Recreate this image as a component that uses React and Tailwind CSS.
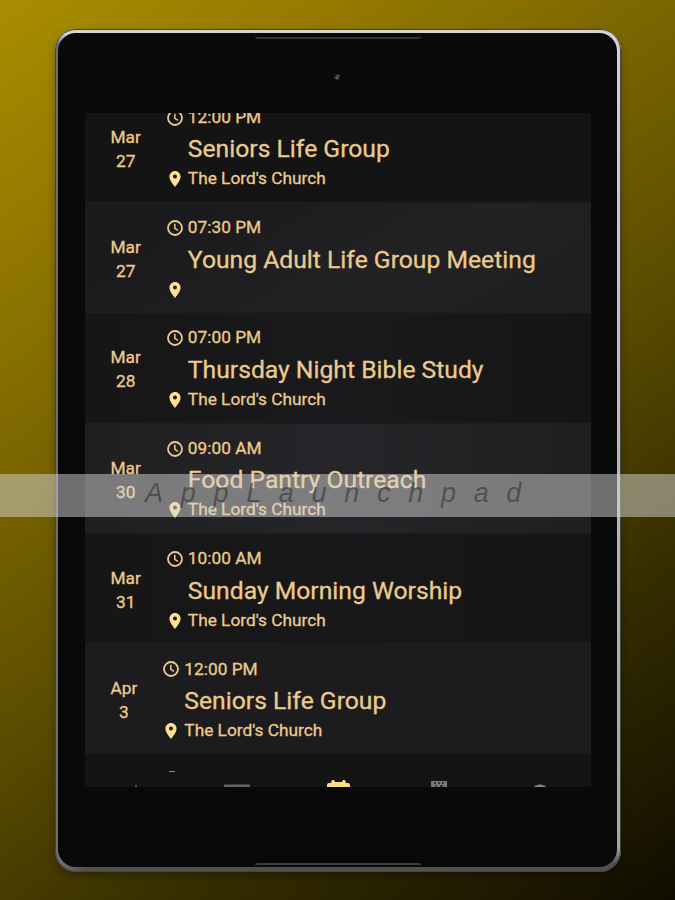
const events = [
  { month: "Mar", day: "27", time: "12:00 PM", title: "Seniors Life Group", place: "The Lord's Church", bg: "bg-[#141414]" },
  { month: "Mar", day: "27", time: "07:30 PM", title: "Young Adult Life Group Meeting", place: "", bg: "bg-[linear-gradient(150deg,#1b1b1d_20%,#222225_60%,#1e1e20)]" },
  { month: "Mar", day: "28", time: "07:00 PM", title: "Thursday Night Bible Study", place: "The Lord's Church", bg: "bg-[linear-gradient(90deg,#161617,#1a1a1c_50%,#151516)]" },
  { month: "Mar", day: "30", time: "09:00 AM", title: "Food Pantry Outreach", place: "The Lord's Church", bg: "bg-[linear-gradient(90deg,#1f1f21,#26262a_50%,#1f1f21)]" },
  { month: "Mar", day: "31", time: "10:00 AM", title: "Sunday Morning Worship", place: "The Lord's Church", bg: "bg-[linear-gradient(90deg,#161617,#18181a_50%,#151515)]" },
  { month: "Apr", day: "3", time: "12:00 PM", title: "Seniors Life Group", place: "The Lord's Church", bg: "bg-[#1c1c1e]" },
];

function Clock() {
  return (
    <svg viewBox="0 0 16 16" className="h-4 w-4 shrink-0" fill="none" stroke="currentColor">
      <circle cx="8" cy="8" r="7" strokeWidth="1.8" />
      <path d="M7.800 3.800v4.600l3.200 2" strokeWidth="1.500" />
    </svg>
  );
}

function Pin() {
  return (
    <svg viewBox="5 2 14 20" className="h-4 w-4 shrink-0 text-[#ffe093]" fill="currentColor">
      <path d="M12 2C8.130 2 5 5.130 5 9c0 5.250 7 13 7 13s7-7.750 7-13c0-3.870-3.130-7-7-7zm0 9.500a2.500 2.500 0 1 1 0-5 2.500 2.500 0 0 1 0 5z" />
    </svg>
  );
}

function EventRow({ event }) {
  return (
    <div className={`flex h-[110.350px] shrink-0 border-t border-[#1e1e20] pl-[26px] ${event.bg}`}>
      <div className="mt-[32px] text-center text-[17.300px] leading-6">
        <div>{event.month}</div>
        <div>{event.day}</div>
      </div>
      <div className="ml-[26px] mt-[13px]">
        <div className="flex h-6 items-center gap-[5px] text-[17.300px]">
          <Clock />
          <span>{event.time}</span>
        </div>
        <div className="flex h-[38px] items-center whitespace-nowrap pl-[21px] text-[24.700px]">{event.title}</div>
        <div className="flex h-[23px] items-center gap-[5px] text-[17.300px]">
          <Pin />
          <span>{event.place}</span>
        </div>
      </div>
    </div>
  );
}

function TabBar() {
  return (
    <div className="flex h-[33.200px] shrink-0 flex-col justify-between bg-[#141414]">
      <div className="ml-[84px] mt-[17px] h-px w-[6px] bg-[#a39059]" />
      <svg viewBox="0 0 506 8" className="h-2 w-full">
        <path d="M50 8V6h2v2z" fill="#555" />
        <rect x="139" y="5.500" width="26" height="4" rx="1" fill="#656565" />
        <path d="M242 8V6q0-2 2-2h2l1-3h2l1 2h7l1-2h2l1 3h2q2 0 2 2v2z" fill="#ffdc8c" />
        <path d="M346 8V2h16v6" fill="#777" />
        <path d="M349 4h2m2 0h2m2 0h2M350 7h2m3 0h3" stroke="#242424" strokeWidth="1.500" />
        <path d="M449 8q1-2 4-2 1-1.500 4 0 3 0 4 2z" fill="#888" />
      </svg>
    </div>
  );
}

export default function App() {
  return (
    <div className="relative h-[900px] w-[675px] overflow-hidden bg-[linear-gradient(145deg,#a98d00_0%,#8a7100_25%,#5f5000_52%,#342c00_76%,#100d00_100%)] pl-[55px] pt-[29px] font-['Roboto','Liberation_Sans',sans-serif]">
      <div className="h-[843px] w-[566px] rounded-[21px] bg-[linear-gradient(180deg,#d4d4d4_0%,#b9b9b9_50%,#a6a6a6_97%,#505050_99%)] shadow-[0_4px_8px_rgba(0,0,0,0.3)]">
        <div className="h-full w-full rounded-[21px] border border-[#45453e] bg-[linear-gradient(180deg,#d4d4d4_0,#d4d4d4_4px,transparent_14px),linear-gradient(90deg,#6b6f75_0,#6b6f75_4px,transparent_30px)] pb-[4px] pl-[2px] pr-[3px] pt-[3px]">
          <div className="flex h-full w-full flex-col items-center rounded-[18px] bg-[#090909]">
            <div className="flex h-[80px] w-full shrink-0 flex-col items-center">
              <div className="mt-[3px] h-[3px] w-[166px] rounded-b-[3px] border-b-2 border-[#343434]" />
              <svg viewBox="0 0 8 8" className="mr-[1px] mt-[34px] h-2 w-2">
                <circle cx="4" cy="4" r="3" fill="#1c1c1c" />
                <path d="M1 4h4v3z" fill="#666" />
                <circle cx="5" cy="3" r="1.500" fill="#514d79" />
              </svg>
            </div>
            <div className="flex h-[674px] w-[506px] shrink-0 flex-col justify-end overflow-hidden bg-[#141414] text-[#ebcb8c] [-webkit-text-stroke:0.3px_#ebcb8c]">
              {events.map((event, i) => (
                <EventRow key={i} event={event} />
              ))}
              <TabBar />
            </div>
            <div className="mt-auto h-[4px] w-[166px] rounded-t-[3px] border-t-2 border-[#3c3c3c]" />
          </div>
        </div>
      </div>
      <div className="absolute left-0 top-[474px] flex h-[43px] w-full items-center bg-[#d6d6d6]/50 pb-[4px] pl-[145px] font-['Liberation_Sans',sans-serif] text-[27px] italic tracking-[17.700px] text-[#242424]/50">
        AppLaunchpad
      </div>
    </div>
  );
}
